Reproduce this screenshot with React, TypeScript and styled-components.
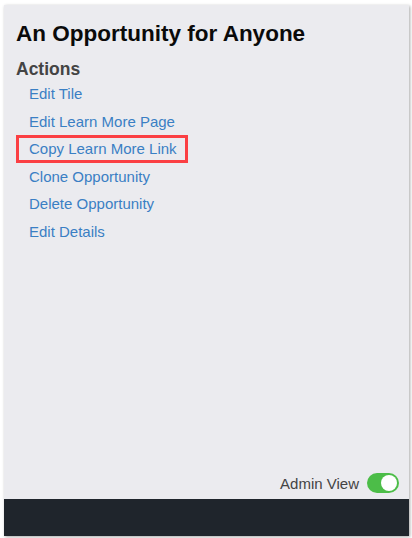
import React from "react"
import styled, {createGlobalStyle} from "styled-components"

const GlobalStyle = createGlobalStyle`
    html, body {
        margin: 0;
        padding: 0;
        background: #ffffff;
        font-family: "Liberation Sans", Arial, sans-serif;
    }
`

const Page = styled.div`
    width: 412px;
    height: 538px;
    box-sizing: border-box;
    padding: 5px 3px 2px 4px;
`

const Card = styled.div`
    height: 100%;
    display: flex;
    flex-direction: column;
    background: #ebebef;
    box-shadow: 1px 1px 3px rgba(0, 0, 0, 0.35);
`

const Body = styled.div`
    flex: 1;
    display: flex;
    flex-direction: column;
    padding: 16px 0 0 12px;
`

const Title = styled.h2`
    margin: 0;
    font-size: 22.5px;
    font-weight: bold;
    color: #0a0a0a;
    line-height: 26px;
`

const SectionTitle = styled.h3`
    margin: 12px 0 1px 0;
    font-size: 17.5px;
    font-weight: bold;
    color: #444;
    line-height: 20px;
`

const ActionList = styled.div`
    display: flex;
    flex-direction: column;
`

const ActionLink = styled.a<{ readonly highlighted?: boolean }>`
    display: block;
    align-self: flex-start;
    box-sizing: border-box;
    height: 27.5px;
    padding: 0 8px 0 10px;
    border: 3px solid ${({highlighted}) => highlighted ? "#fb3f43" : "transparent"};
    font-size: 15px;
    line-height: 21.5px;
    color: #3a7fc4;
    text-decoration: none;
`

const Footer = styled.div`
    margin-top: auto;
    display: flex;
    justify-content: flex-end;
    align-items: center;
    gap: 8px;
    padding: 0 10px 6px 0;
`

const FooterLabel = styled.span`
    font-size: 15px;
    color: #444;
`

const Toggle = styled.div<{ readonly on: boolean }>`
    width: 32px;
    height: 20px;
    border-radius: 10px;
    background: ${({on}) => on ? "#4cbd48" : "#ccc"};
    display: flex;
    align-items: center;
    justify-content: ${({on}) => on ? "flex-end" : "flex-start"};
    padding: 2px;
    box-sizing: border-box;
`

const Knob = styled.div`
    width: 16px;
    height: 16px;
    border-radius: 50%;
    background: #fff;
`

const BottomBar = styled.div`
    height: 37px;
    background: #1f252c;
`

const actions = [
    "Edit Tile",
    "Edit Learn More Page",
    "Copy Learn More Link",
    "Clone Opportunity",
    "Delete Opportunity",
    "Edit Details",
]

export default function App() {
    return <>
        <GlobalStyle/>
        <Page>
            <Card>
                <Body>
                    <Title>An Opportunity for Anyone</Title>
                    <SectionTitle>Actions</SectionTitle>
                    <ActionList>
                        {actions.map(action =>
                            <ActionLink key={action} href="#" highlighted={action === "Copy Learn More Link"}>
                                {action}
                            </ActionLink>)}
                    </ActionList>
                    <Footer>
                        <FooterLabel>Admin View</FooterLabel>
                        <Toggle on={true}><Knob/></Toggle>
                    </Footer>
                </Body>
                <BottomBar/>
            </Card>
        </Page>
    </>
}
